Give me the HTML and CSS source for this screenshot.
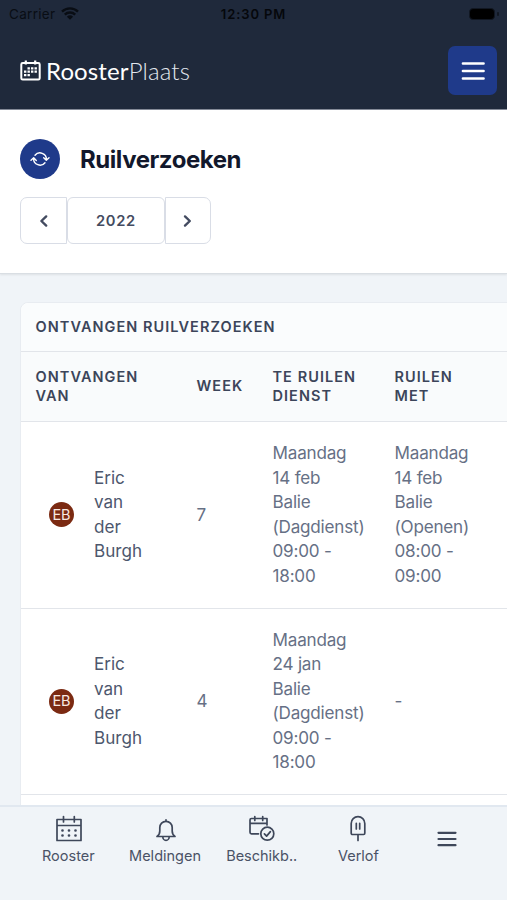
FILE: index.html
```html
<!DOCTYPE html>
<html lang="nl">
<head>
<meta charset="utf-8">
<meta name="viewport" content="width=device-width">
<title>Ruilverzoeken</title>
<link rel="stylesheet" href="styles.css">
</head>
<body>
<div class="app">
  <header class="topbar">
    <div class="status">
      <div class="carrier"><span>Carrier</span>
        <svg class="wifi" viewBox="0 0 18 13"><path d="M1 4.6a11.5 11.5 0 0 1 16 0M3.8 7.6a7.4 7.4 0 0 1 10.4 0" fill="none" stroke="currentColor" stroke-width="2.4"/><path d="M5.900 9.700a4.500 4.500 0 0 1 6.200 0L9 12.800z" fill="currentColor"/></svg>
      </div>
      <div class="clock">12:30 PM</div>
      <div class="power"><span class="battery"></span><span class="battery-tip"></span></div>
    </div>
    <div class="brandbar">
      <div class="brand">
        <svg class="brand-icon" viewBox="0 0 21 21"><rect x="1.300" y="3" width="18.400" height="16.600" rx="1.400" fill="none" stroke="currentColor" stroke-width="2"/><path d="M5.800 .5v4M15.200 .5v4" stroke="currentColor" stroke-width="2.200"/><path d="M7.500 8.300h9.500M4 11.700h13M4 15.100h6" stroke="currentColor" stroke-width="2.300" stroke-dasharray="2.400 1.100"/></svg>
        <span class="brand-name">Rooster<span class="brand-light">Plaats</span></span>
      </div>
      <button class="menu-button" aria-label="Menu"><svg viewBox="0 0 24 20"><path d="M2 2.500h20.500M2 10h20.500M2 17.500h20.500" stroke="currentColor" stroke-width="2.700" stroke-linecap="round"/></svg></button>
    </div>
  </header>
  <section class="page-head">
    <div class="title-row">
      <span class="title-icon"><svg viewBox="0 0 20 16"><path d="M5 4.300A6.400 6.400 0 0 1 16.400 8.500M15 11.700A6.400 6.400 0 0 1 3.600 7.500M1 9.300l2.700-2.500 2.600 2.600M13.700 6.700l2.600 2.600L19 6.800" fill="none" stroke="currentColor" stroke-width="1.400" stroke-linecap="round" stroke-linejoin="round"/></svg></span>
      <h1>Ruilverzoeken</h1>
    </div>
    <div class="year-nav">
      <button class="prev" aria-label="Vorige"><svg viewBox="0 0 10 14"><path d="M7.200 2.400 2.400 7l4.800 4.600" /></svg></button>
      <button class="year">2022</button>
      <button class="next" aria-label="Volgende"><svg viewBox="0 0 10 14"><path d="M2 2.400 6.800 7 2 11.600" /></svg></button>
    </div>
  </section>
  <main class="content">
    <div class="card">
      <h2>Ontvangen ruilverzoeken</h2>
      <table>
        <colgroup><col class="c-from"><col class="c-week"><col class="c-shift"><col class="c-with"></colgroup>
        <thead><tr><th>Ontvangen<br>van</th><th>Week</th><th>Te ruilen<br>dienst</th><th>Ruilen<br>met</th></tr></thead>
        <tbody>
          <tr><td><div class="person"><span class="avatar">EB</span><span class="name">Eric<br>van<br>der<br>Burgh</span></div></td><td>7</td><td>Maandag<br>14 feb<br>Balie<br>(Dagdienst)<br>09:00 -<br>18:00</td><td>Maandag<br>14 feb<br>Balie<br>(Openen)<br>08:00 -<br>09:00</td></tr>
          <tr><td><div class="person"><span class="avatar">EB</span><span class="name">Eric<br>van<br>der<br>Burgh</span></div></td><td>4</td><td>Maandag<br>24 jan<br>Balie<br>(Dagdienst)<br>09:00 -<br>18:00</td><td>-</td></tr>
        </tbody>
      </table>
    </div>
  </main>
  <nav class="tabs">
    <a class="tab"><svg class="i-cal" viewBox="0 0 26 26"><path d="M1 3.500h24v21H1zM1 9.500h24M7.500 .5v5.500M18.300 .5v5.500"/><path class="dots" d="M6.500 14.500h14M6.500 19.500h14"/></svg><span>Rooster</span></a>
    <a class="tab"><svg class="i-bell" viewBox="0 0 20 24"><path d="M1 18.500c2-1.300 2.800-2.700 2.800-5.500V9.500C3.800 6 6.500 3.300 10 3.300S16.200 6 16.200 9.500V13c0 2.800.8 4.200 2.800 5.500zM10 3.200V1.800M6.800 18.700a3.200 3.700 0 0 0 6.400 0"/></svg><span>Meldingen</span></a>
    <a class="tab"><svg class="i-check" viewBox="0 0 26 26"><path d="M9.500 17.800H2.500a1.500 1.500 0 0 1-1.500-1.500V4A1.500 1.500 0 0 1 2.500 2.500H18v6.500M1 7.300h17M5.800 .5v4M13.700 .5v4"/><circle cx="18.300" cy="17.700" r="6.500"/><path d="m15.400 17.900 2.200 2.200 3.800-4.500"/></svg><span>Beschikb..</span></a>
    <a class="tab"><svg class="i-ice" viewBox="0 0 16 26"><path d="M1.200 7.500a6.800 6.800 0 0 1 13.600 0v9.800a1.200 1.200 0 0 1-1.200 1.200H2.400a1.200 1.200 0 0 1-1.200-1.200zM6.300 7.300v5.700M9.700 7.300v5.700M8 18.800v5.700"/></svg><span>Verlof</span></a>
    <a class="tab more" aria-label="Meer"><svg viewBox="0 0 20 16"><path d="M1.500 1.800h17M1.500 8h17M1.500 14.200h17"/></svg></a>
  </nav>
</div>
</body>
</html>
```

FILE: styles.css
```css
* { box-sizing: border-box; }
body { margin: 0; font-family: Inter, "Liberation Sans", sans-serif; background: #f0f4f8; color: #475069; }
button { font: inherit; color: inherit; padding: 0; margin: 0; display: flex; align-items: center; justify-content: center; }
svg { display: block; overflow: visible; }
.app { height: 900px; width: 100%; display: flex; flex-direction: column; overflow: hidden; }
.topbar { height: 110px; flex: none; background: #1f293b; border-bottom: 1px solid #858b98; }
.status { height: 27px; display: grid; grid-template-columns: 1fr auto 1fr; align-items: center; padding: 0 8px 0 9px; color: #05070b; font-size: 13.5px; }
.carrier { display: flex; align-items: center; gap: 6px; letter-spacing: .3px; color: #090d14; }
.wifi { width: 18px; height: 13px; }
.clock { font-weight: 600; letter-spacing: .9px; font-size: 13px; margin-right: 1px; }
.power { display: flex; justify-content: flex-end; align-items: center; gap: 2px; }
.battery { width: 26px; height: 12px; border: 1px solid #111722; border-radius: 4px; background: #000; }
.battery-tip { width: 2px; height: 4px; border-radius: 1px; background: #111722; }
.brandbar { height: 82px; display: flex; align-items: center; justify-content: space-between; padding: 4px 10px 0 20px; }
.brand { display: flex; align-items: center; gap: 5px; color: #fff; padding-top: 3px; }
.brand-icon { width: 21px; height: 21px; margin-top: -3px; }
.brand-name { font-family: Lato, sans-serif; font-size: 24px; line-height: 28px; letter-spacing: .12px; margin-top: -1px; }
.brand-light { font-weight: 300; color: #e2e7ee; }
.menu-button { width: 49px; height: 49px; border: 0; border-radius: 7px; background: #1f3a8a; color: #fff; }
.menu-button svg { width: 24px; height: 20px; margin-top: 1px; }
.page-head { height: 164px; flex: none; background: #fff; padding: 29px 20px 0; border-bottom: 1px solid #d9dee3; box-shadow: 0 1px 2px #00000014; }
.title-row { display: flex; align-items: center; gap: 20px; height: 39px; }
.title-icon { width: 40px; height: 40px; border-radius: 50%; background: #1f3a8a; color: #fff; display: flex; align-items: center; justify-content: center; }
.title-icon svg { width: 20px; height: 16px; }
h1 { margin: 2px 0 0; font-size: 24px; line-height: 30px; font-weight: 700; letter-spacing: -.45px; color: #12182c; }
.year-nav { display: flex; margin-top: 19px; height: 47px; }
.year-nav button { border: 1.500px solid #d9dde6; background: #fff; color: #434b60; }
.year-nav .prev { width: 47px; border-radius: 7px 0 0 7px; }
.year-nav .year { width: 98px; border-radius: 6px; font-size: 14.700px; font-weight: 600; letter-spacing: .7px; }
.year-nav .next { width: 46px; border-radius: 0 7px 7px 0; }
.year-nav svg { width: 10px; height: 14px; fill: none; stroke: currentColor; stroke-width: 2.400; stroke-linecap: round; stroke-linejoin: round; }
.content { flex: 1; min-height: 0; overflow: hidden; padding: 28px 0 0 20px; }
.card { width: 530px; height: 700px; background: #fff; border: 1px solid #e8ecf1; border-radius: 8px 0 0 0; }
h2, th { font-size: 14.500px; line-height: 19.500px; font-weight: 600; letter-spacing: 1.050px; text-transform: uppercase; color: #3c455a; }
h2 { margin: 0; height: 49px; padding: 14px 14.500px; background: #fafcfd; border-radius: 8px 0 0 0; border-bottom: 1px solid #e2e5ea; }
table { width: 530px; border-collapse: separate; border-spacing: 0; table-layout: fixed; }
.c-from { width: 161px; } .c-week { width: 76px; } .c-shift { width: 122px; } .c-with { width: 171px; }
th { text-align: left; height: 70px; padding: 0 0 1px 14.500px; background: #f9fbfc; border-bottom: 1px solid #e2e5ea; }
td { height: 186.500px; padding: 0 0 0 14.500px; font-size: 17.100px; line-height: 24.450px; letter-spacing: -.2px; border-bottom: 1px solid #e2e5ea; color: #667085; }
.person { display: flex; align-items: center; padding-left: 13.500px; gap: 20px; color: #4d576d; }
.name { letter-spacing: 0; }
.avatar { width: 25px; height: 25px; border-radius: 50%; background: #7b2a12; color: #f8e8e2; font-size: 14.500px; display: flex; align-items: center; justify-content: center; }
.tabs { position: relative; height: 95px; flex: none; display: grid; grid-template-columns: repeat(4, 96.700px) 1fr; padding: 9px 20px 0 20px; background: #f0f4f8; border-top: 2px solid #e1e8f0; }
.tab { display: flex; flex-direction: column; align-items: center; color: #4a5266; font-size: 14.500px; line-height: 20px; }
.tab svg { fill: none; stroke: #3e475a; stroke-width: 1.700; stroke-linecap: round; stroke-linejoin: round; height: 26px; margin-bottom: 4px; }
.tab .dots { stroke-width: 2.700; stroke-dasharray: 0 6.500; }
.i-cal, .i-check { width: 26px; } .i-bell { width: 20px; } .i-ice { width: 16px; }
.i-bell { transform: translate(1px, 1px); }
.tab .i-cal { margin-left: 2px; }
.more svg { width: 20px; height: 16px; margin-top: 15px; stroke-width: 2.200; }
```
